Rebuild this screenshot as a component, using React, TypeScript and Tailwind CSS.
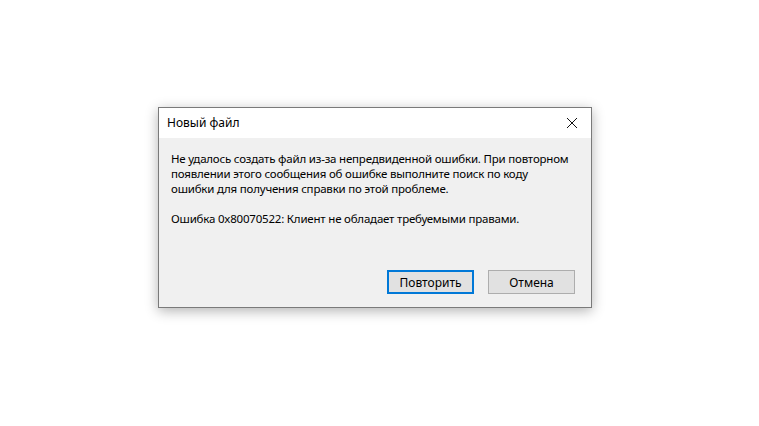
export default function App() {
  return (
    <div
      className="h-[426px] w-[759px] overflow-hidden bg-white pl-[158px] pt-[107px] text-black"
      style={{ fontFamily: '"Noto Sans", "Segoe UI", Arial, sans-serif' }}
    >
      <div className="flex h-[201px] w-[434px] flex-col border border-[#7a7a7a] bg-[#f0f0f0] shadow-[0_3px_12px_rgba(0,0,0,0.3)]">
        {/* title bar */}
        <div className="flex h-[30px] items-center justify-between bg-white pl-[8px] pr-[9px]">
          <span className="text-[12px] leading-none">Новый файл</span>
          <svg width="12" height="12" viewBox="0 0 12 12" className="mr-[4px]">
            <path d="M1 1L11 11M11 1L1 11" stroke="#111" strokeWidth="1" />
          </svg>
        </div>

        {/* body */}
        <div className="flex flex-1 flex-col px-[12px] pt-[13px] text-[11.5px] leading-[15px] tracking-[-0.2px]">
          <p className="whitespace-nowrap">
            Не удалось создать файл из-за непредвиденной ошибки. При повторном
            <br />
            появлении этого сообщения об ошибке выполните поиск по коду
            <br />
            ошибки для получения справки по этой проблеме.
          </p>
          <p className="mt-[15px] whitespace-nowrap">
            Ошибка 0x80070522: Клиент не обладает требуемыми правами.
          </p>

          <div className="mt-auto mb-[13px] flex justify-end gap-[14px] pr-[4px] tracking-normal">
            <button className="h-[24px] w-[87px] border-2 border-[#0078d7] bg-[#e1e1e1] text-[12px]">
              Повторить
            </button>
            <button className="h-[24px] w-[87px] border border-[#adadad] bg-[#e1e1e1] text-[12px]">
              Отмена
            </button>
          </div>
        </div>
      </div>
    </div>
  );
}
